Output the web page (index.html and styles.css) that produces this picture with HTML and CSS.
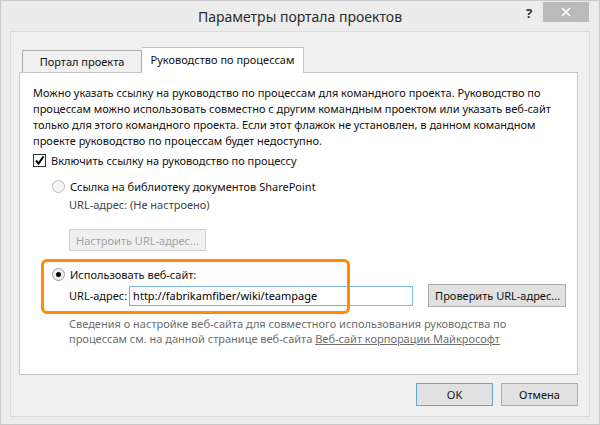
FILE: index.html
```html
<!DOCTYPE html>
<html lang="ru">
<head>
    <meta charset="utf-8">
    <title>Параметры портала проектов</title>
    <link rel="stylesheet" href="styles.css">
</head>
<body>
    <div class="window">
        <div class="titlebar">
            <span class="title">Параметры портала проектов</span>
            <span class="help">?</span>
            <span class="close">
                <svg width="10" height="10" viewBox="0 0 10 10"><path d="M1 1L9 9M9 1L1 9" stroke="#fff" stroke-width="1.6"/></svg>
            </span>
        </div>
        <div class="frame">
            <div class="tabs">
                <div class="tab">Портал проекта</div>
                <div class="tab active">Руководство по процессам</div>
            </div>
            <div class="panel">
                <p class="intro">Можно указать ссылку на руководство по процессам для командного проекта. Руководство по процессам можно использовать совместно с другим командным проектом или указать веб-сайт только для этого командного проекта. Если этот флажок не установлен, в данном командном проекте руководство по процессам будет недоступно.</p>

                <div class="row check-row">
                    <span class="checkbox">
                        <svg width="11" height="11" viewBox="0 0 11 11"><path d="M2 5.5L4.5 8.5L9.5 1.5" fill="none" stroke="#000" stroke-width="2"/></svg>
                    </span>
                    <span>Включить ссылку на руководство по процессу</span>
                </div>

                <div class="options">
                    <div class="row">
                        <span class="radio"></span>
                        <span>Ссылка на библиотеку документов SharePoint</span>
                    </div>
                    <div class="sub">
                        <div class="muted-row">URL-адрес: (Не настроено)</div>
                        <button class="btn disabled">Настроить URL-адрес...</button>
                    </div>

                    <div class="site">
                        <div class="row">
                            <span class="radio checked"></span>
                            <span>Использовать веб-сайт:</span>
                        </div>
                        <div class="url-row">
                            <span class="url-label">URL-адрес:</span>
                            <input class="url-input" type="text" value="http://fabrikamfiber/wiki/teampage">
                            <button class="btn check-btn">Проверить URL-адрес...</button>
                        </div>
                        <div class="highlight"></div>
                    </div>

                    <p class="note">Сведения о настройке веб-сайта для совместного использования руководства по процессам см. на данной странице веб-сайта <a href="#">Веб-сайт корпорации Майкрософт</a></p>
                </div>
            </div>
            <div class="footer">
                <button class="btn default">OK</button>
                <button class="btn">Отмена</button>
            </div>
        </div>
    </div>
</body>
</html>
```

FILE: styles.css
```css
body {
    margin: 0;
    font-family: "Noto Sans", "Open Sans", sans-serif;
    font-size: 11px;
    color: #111;
    background: #ececec;
}
.window {
    width: 598px;
    height: 423px;
    border: 1px solid #c9c9c9;
    background: #ececec;
    position: relative;
}
.titlebar {
    height: 30px;
    position: relative;
    text-align: center;
}
.title {
    display: inline-block;
    margin-top: 6px;
    font-size: 14px;
    color: #2b2b2b;
}
.help {
    position: absolute;
    left: 525px;
    top: 3px;
    font-size: 13px;
    font-weight: bold;
    color: #333;
}
.close {
    position: absolute;
    left: 542px;
    top: 1px;
    width: 46px;
    height: 20px;
    background: #bababa;
    display: flex;
    align-items: center;
    justify-content: center;
}
.frame {
    margin: 0 9px;
    height: 384px;
    border: 1px solid #dadada;
    background: #f0f0f0;
    padding: 0 11px 0 8px;
}
.tabs {
    display: flex;
    align-items: flex-end;
    height: 40px;
    padding-left: 3px;
}
.tab {
    width: 118px;
    height: 21px;
    line-height: 21px;
    white-space: nowrap;
    text-align: center;
    background: #f0f0f0;
    border: 1px solid #adadad;
    border-bottom: none;
}
.tab.active {
    width: 161px;
    height: 25px;
    line-height: 24px;
    background: #fff;
    border-color: #c5c5c5;
    border-left: none;
    position: relative;
    top: 1px;
}
.panel {
    height: 301px;
    background: #fff;
    border: 1px solid #c5c5c5;
    padding: 0 13px;
}
.intro {
    margin: 12px 0 0;
    width: 535px;
    line-height: 16px;
}
.row {
    display: flex;
    align-items: center;
    gap: 5px;
    height: 18px;
    white-space: nowrap;
}
.check-row {
    margin-top: 2px;
}
.checkbox {
    width: 11px;
    height: 11px;
    border: 1px solid #333;
    background: #fff;
    display: flex;
}
.options {
    padding-left: 19px;
}
.options > .row {
    margin-top: 8px;
}
.radio {
    width: 11px;
    height: 11px;
    border: 1px solid #bcbcbc;
    border-radius: 50%;
    background: #f4f4f4;
    position: relative;
}
.radio.checked {
    border-color: #a0a0a0;
    background: #ededed;
}
.radio.checked::after {
    content: "";
    position: absolute;
    left: 3px;
    top: 3px;
    width: 5px;
    height: 5px;
    border-radius: 50%;
    background: #000;
}
.sub {
    padding-left: 17px;
}
.muted-row {
    margin-top: 2px;
    color: #444;
    height: 18px;
}
.btn {
    font-family: inherit;
    font-size: 11px;
    color: #111;
    background: #e1e1e1;
    border: 1px solid #adadad;
    padding: 0 6px;
    height: 23px;
    white-space: nowrap;
}
.btn.disabled {
    margin-top: 14px;
    height: 22px;
    color: #a3a3a3;
    background: #f0f0f0;
    border-color: #d0d0d0;
}
.site {
    position: relative;
    margin-top: 14px;
}
.url-row {
    display: flex;
    align-items: center;
    gap: 2px;
    margin-top: 1px;
    padding-left: 17px;
    white-space: nowrap;
}
.url-label {
    flex-shrink: 0;
}
.url-input {
    flex-shrink: 0;
    width: 284px;
    height: 20px;
    box-sizing: border-box;
    border: 1px solid #7eb4ea;
    font-family: inherit;
    font-size: 11px;
    padding: 0 3px;
    color: #000;
}
.check-btn {
    flex-shrink: 0;
    margin-left: 13px;
    width: 138px;
}
.highlight {
    position: absolute;
    left: -11px;
    top: -6px;
    width: 309px;
    height: 55px;
    box-sizing: border-box;
    border: 3px solid #ff8c00;
    border-radius: 6px;
}
.note {
    margin: 9px 0 0 17px;
    width: 445px;
    line-height: 15px;
    color: #6d6d6d;
}
.note a {
    color: #6d6d6d;
}
.footer {
    display: flex;
    justify-content: flex-end;
    gap: 8px;
    padding-top: 8px;
}
.footer .btn {
    width: 77px;
}
.btn.default {
    border-color: #5ea6e0;
}
```
